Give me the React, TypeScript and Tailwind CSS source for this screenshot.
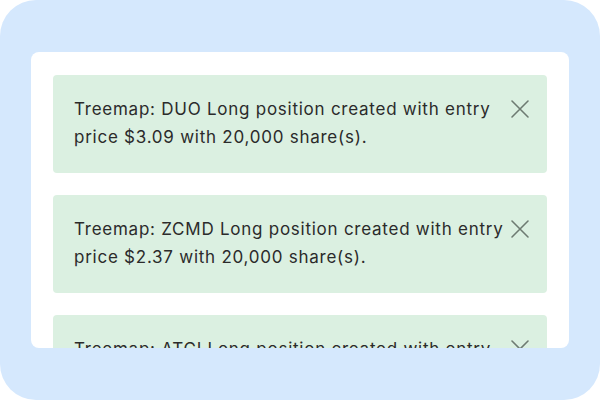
import React from "react";

const items = [
  { sym: "DUO", price: "$3.09" },
  { sym: "ZCMD", price: "$2.37" },
  { sym: "ATCI", price: "$1.12" },
];

function XIcon() {
  return (
    <svg width="20" height="20" viewBox="0 0 20 20" fill="none" stroke="#6e7b72" strokeWidth="1.6" strokeLinecap="round">
      <path d="M2 2 L18 18 M18 2 L2 18" />
    </svg>
  );
}

export default function App() {
  return (
    <div className="w-[600px] h-[400px] bg-white">
      <div className="w-full h-full rounded-[36px] bg-[#d5e8fd] pt-[52px] px-[31px]" style={{ fontFamily: "Inter, 'Noto Sans', sans-serif" }}>
        <div className="h-[296px] bg-white rounded-[8px] overflow-hidden px-[22px] pt-[23px] flex flex-col gap-[22px]">
          {items.map((it) => (
            <div key={it.sym} className="shrink-0 h-[98px] bg-[#dbf0e1] rounded-[4px] pl-[21px] pt-[20px] flex items-start">
              <p className="w-[432px] text-[17px] tracking-[0.75px] leading-[28px] text-[#2b2b2b]">
                Treemap: {it.sym} Long position created with entry price {it.price} with 20,000 share(s).
              </p>
              <div className="mt-[4px] ml-[4px]">
                <XIcon />
              </div>
            </div>
          ))}
        </div>
      </div>
    </div>
  );
}
